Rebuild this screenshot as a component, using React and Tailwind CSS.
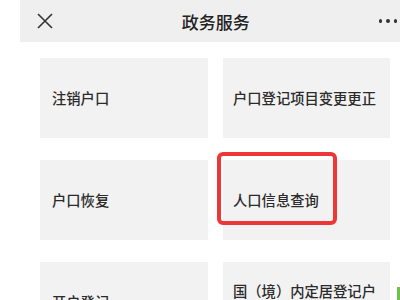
const items = [
  '注销户口',
  '户口登记项目变更更正',
  '户口恢复',
  '人口信息查询',
  '开户登记',
  '国（境）内定居登记户口',
];

const App = () => {
  return (
    <div
      className="w-[400px] h-[300px] overflow-hidden bg-white relative"
      style={{ fontFamily: '"Noto Sans CJK SC", "Noto Sans", sans-serif' }}
    >
      <header className="ml-[20px] h-[42px] bg-[#efefef] flex items-center">
        <svg className="ml-[17px]" width="16" height="16" viewBox="0 0 16 16">
          <path d="M1 1 L15 15 M15 1 L1 15" stroke="#333" strokeWidth="1.6" fill="none" />
        </svg>
        <div className="flex-1 text-center text-[17px] font-medium text-[#222] leading-none">政务服务</div>
        <div className="mr-[3px] flex gap-[4px]">
          <span className="w-[3.5px] h-[3.5px] rounded-full bg-[#333]" />
          <span className="w-[3.5px] h-[3.5px] rounded-full bg-[#333]" />
          <span className="w-[3.5px] h-[3.5px] rounded-full bg-[#333]" />
        </div>
      </header>

      <div className="mt-[16px] ml-[40px] mr-[10px] grid grid-cols-[168px_167px] gap-x-[15px] gap-y-[22px]">
        {items.map((t, i) => (
          <div
            key={t}
            className={
              'relative h-[80px] bg-[#f2f2f2] flex items-center text-[14.3px] font-medium leading-[22px] text-[#2b2b2b] ' +
              (i % 2 === 0 ? 'pl-[12px]' : 'pl-[10px] pr-[6px]')
            }
          >
            <span>{t}</span>
            {i === 3 && (
              <div className="absolute left-[-6px] top-[-8px] w-[120px] h-[73px] border-[4px] border-[#ee3636] rounded-[6px]" />
            )}
          </div>
        ))}
      </div>

      <div className="absolute right-0 top-[287px] w-[3px] h-[13px] bg-[#6cc24a]" />
    </div>
  );
};

export default App;
